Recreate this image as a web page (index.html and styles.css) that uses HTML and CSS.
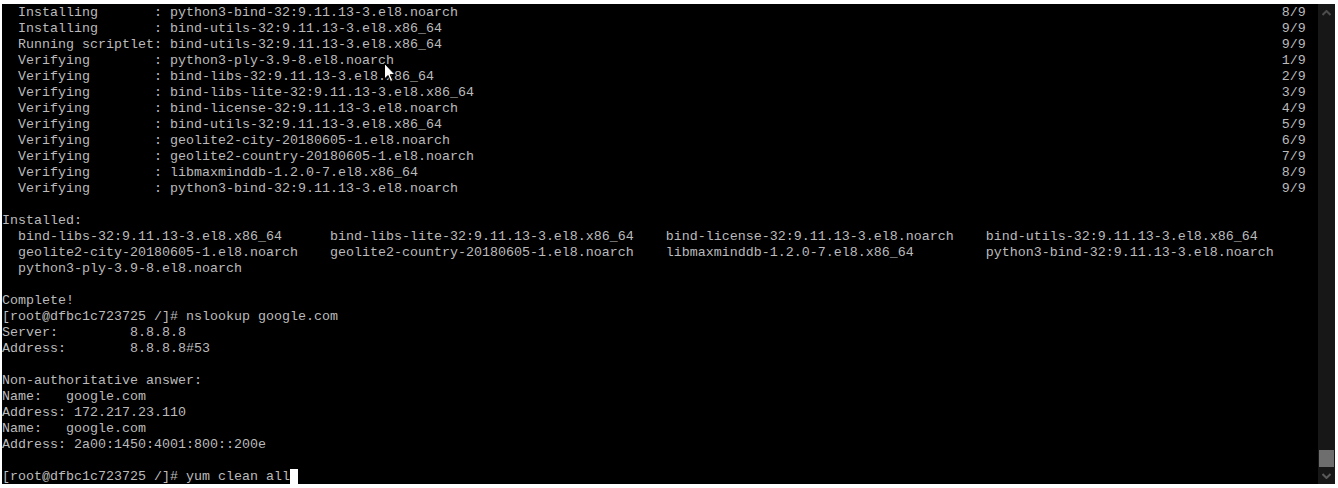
FILE: index.html
```html
<!DOCTYPE html>
<html>
<head>
<meta charset="utf-8">
<link rel="stylesheet" href="styles.css">
</head>
<body>
<div class="window">
<pre class="screen">  Installing       : python3-bind-32:9.11.13-3.el8.noarch                                                                                                       8/9
  Installing       : bind-utils-32:9.11.13-3.el8.x86_64                                                                                                         9/9
  Running scriptlet: bind-utils-32:9.11.13-3.el8.x86_64                                                                                                         9/9
  Verifying        : python3-ply-3.9-8.el8.noarch                                                                                                               1/9
  Verifying        : bind-libs-32:9.11.13-3.el8.x86_64                                                                                                          2/9
  Verifying        : bind-libs-lite-32:9.11.13-3.el8.x86_64                                                                                                     3/9
  Verifying        : bind-license-32:9.11.13-3.el8.noarch                                                                                                       4/9
  Verifying        : bind-utils-32:9.11.13-3.el8.x86_64                                                                                                         5/9
  Verifying        : geolite2-city-20180605-1.el8.noarch                                                                                                        6/9
  Verifying        : geolite2-country-20180605-1.el8.noarch                                                                                                     7/9
  Verifying        : libmaxminddb-1.2.0-7.el8.x86_64                                                                                                            8/9
  Verifying        : python3-bind-32:9.11.13-3.el8.noarch                                                                                                       9/9

Installed:
  bind-libs-32:9.11.13-3.el8.x86_64      bind-libs-lite-32:9.11.13-3.el8.x86_64    bind-license-32:9.11.13-3.el8.noarch    bind-utils-32:9.11.13-3.el8.x86_64
  geolite2-city-20180605-1.el8.noarch    geolite2-country-20180605-1.el8.noarch    libmaxminddb-1.2.0-7.el8.x86_64         python3-bind-32:9.11.13-3.el8.noarch
  python3-ply-3.9-8.el8.noarch

Complete!
[root@dfbc1c723725 /]# nslookup google.com
Server:         8.8.8.8
Address:        8.8.8.8#53

Non-authoritative answer:
Name:   google.com
Address: 172.217.23.110
Name:   google.com
Address: 2a00:1450:4001:800::200e

[root@dfbc1c723725 /]# yum clean all<span class="cursor"> </span><svg class="pointer" width="13" height="20" viewBox="0 0 13 20"><path d="M0.5 0.5 L0.5 16 L4 12.5 L6.5 18.5 L8.8 17.5 L6.3 11.6 L11 11.6 Z" fill="#fff" stroke="#000" stroke-width="1"/></svg></pre>
<div class="scrollbar">
<div class="sb-btn"><svg width="9" height="6" viewBox="0 0 9 6"><path d="M0.5 5 L4.5 1 L8.5 5" fill="none" stroke="#4d4d4d" stroke-width="2"/></svg></div>
<div class="sb-track"><div class="sb-thumb"></div></div>
<div class="sb-btn"><svg width="9" height="6" viewBox="0 0 9 6"><path d="M0.5 1 L4.5 5 L8.5 1" fill="none" stroke="#5a5a5a" stroke-width="2"/></svg></div>
</div>
</div>
</body>
</html>
```

FILE: styles.css
```css
html, body {
  margin: 0;
  padding: 0;
  background: #ffffff;
}
body {
  width: 1338px;
  height: 488px;
  overflow: hidden;
}
.window {
  display: flex;
  margin: 4px 3px 0 2px;
  height: 480px;
  background: #000;
}
.screen {
  position: relative;
  flex: 1;
  margin: 0;
  padding-top: 1px;
  font-family: "Liberation Mono", "Courier New", monospace;
  font-size: 13.333px;
  line-height: 16px;
  color: #bbbbbb;
  background: #000;
  white-space: pre;
  overflow: hidden;
}
.cursor {
  background: #ffffff;
}
.pointer {
  position: absolute;
  left: 382px;
  top: 59px;
}
.scrollbar {
  width: 17px;
  display: flex;
  flex-direction: column;
  background: #171717;
}
.sb-btn {
  height: 17px;
  display: flex;
  align-items: center;
  justify-content: center;
}
.sb-track {
  flex: 1;
  display: flex;
  flex-direction: column;
  justify-content: flex-end;
  align-items: center;
}
.sb-thumb {
  width: 15px;
  height: 17px;
  background: #6e6e6e;
}
```
